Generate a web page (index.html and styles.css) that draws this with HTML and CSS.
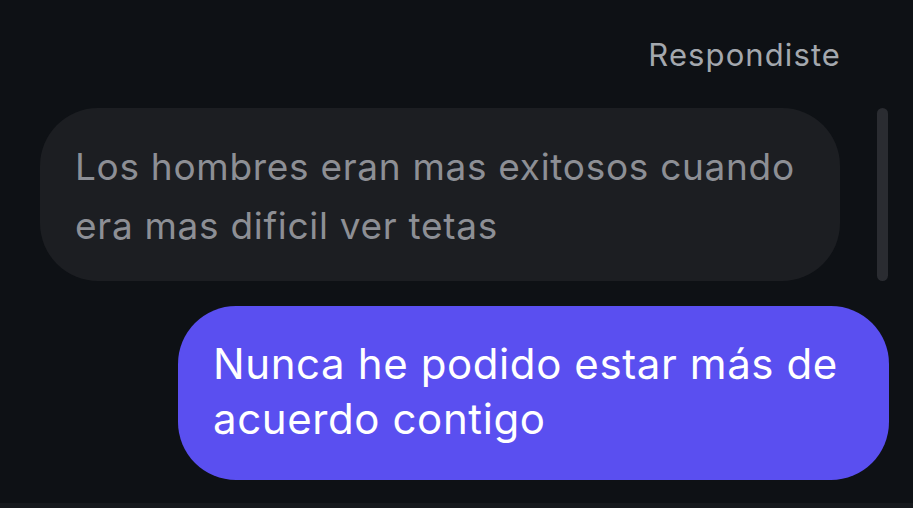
FILE: index.html
```html
<!DOCTYPE html>
<html lang="es">
<head>
  <meta charset="UTF-8" />
  <meta name="viewport" content="width=device-width, initial-scale=1.0"/>
  <title>Respuesta</title>
  <link rel="stylesheet" href="styles.css">
</head>
<body>
  <div class="chat">
    <div class="label">Respondiste</div>

    <div class="quote-row">
      <div class="bubble quoted">
        Los hombres eran mas exitosos cuando era mas dificil ver tetas
      </div>
      <div class="scrollbar"></div>
    </div>

    <div class="bubble sent">
      Nunca he podido estar más de acuerdo contigo
    </div>
  </div>
  <div class="composer"></div>
</body>
</html>
```

FILE: styles.css
```css
* {
  box-sizing: border-box;
}

body {
  margin: 0;
  height: 100vh;
  display: flex;
  flex-direction: column;
  background: #0e1115;
  font-family: Inter, 'Noto Sans', sans-serif;
  overflow: hidden;
}

.chat {
  flex: 1;
  display: flex;
  flex-direction: column;
  padding-top: 38px;
}

.label {
  align-self: flex-end;
  margin-right: 72px;
  font-size: 31px;
  line-height: 34px;
  letter-spacing: 1.1px;
  color: #a4a8ae;
}

.quote-row {
  display: flex;
  align-items: stretch;
  margin-top: 36px;
}

.bubble {
  border-radius: 58px;
}

.quoted {
  width: 800px;
  height: 173px;
  margin-left: 40px;
  padding: 29px 30px 0 35px;
  background: #1c1e22;
  color: #8d8f95;
  font-size: 37px;
  line-height: 59px;
  letter-spacing: 0.7px;
}

.scrollbar {
  width: 11px;
  margin-left: 37px;
  border-radius: 6px;
  background: #2a2c31;
}

.sent {
  width: 711px;
  height: 174px;
  margin-left: 178px;
  margin-top: 25px;
  padding: 30px 30px 0 35px;
  background: #5a4ff0;
  color: #ffffff;
  font-size: 42px;
  line-height: 55px;
  letter-spacing: 0.6px;
}

.composer {
  height: 5px;
  background: #16191d;
}
```
